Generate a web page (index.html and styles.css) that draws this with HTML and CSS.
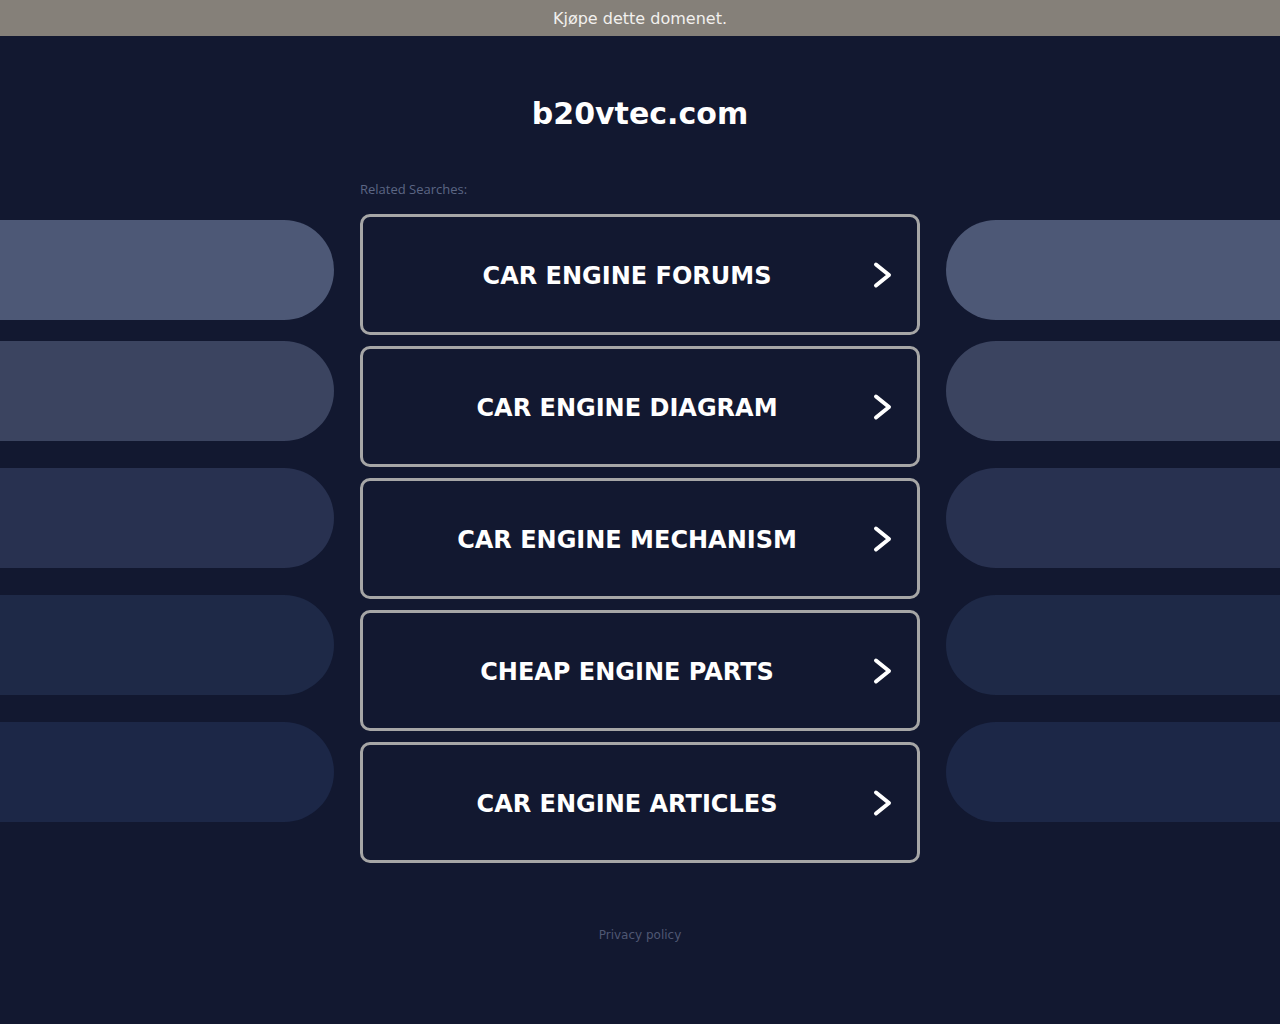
FILE: index.html
```html
<!DOCTYPE html>
<html>
<head>
  <meta charset="utf-8">
  <title>b20vtec.com</title>
  <link rel="stylesheet" href="styles.css">
</head>
<body>
  <div class="buy-bar"><a href="#">Kjøpe dette domenet.</a></div>

  <h1 class="domain">b20vtec.com</h1>

  <div class="layout">
    <div class="side side-left">
      <div class="pill pill-1"></div>
      <div class="pill pill-2"></div>
      <div class="pill pill-3"></div>
      <div class="pill pill-4"></div>
      <div class="pill pill-5"></div>
    </div>

    <div class="center">
      <p class="related">Related Searches:</p>
      <ul class="links">
        <li><a href="#"><span>Car Engine Forums</span><svg class="chev" viewBox="0 0 20 28"><path d="M3 3.5 L16 14 L3 24.5"/></svg></a></li>
        <li><a href="#"><span>Car Engine Diagram</span><svg class="chev" viewBox="0 0 20 28"><path d="M3 3.5 L16 14 L3 24.5"/></svg></a></li>
        <li><a href="#"><span>Car Engine Mechanism</span><svg class="chev" viewBox="0 0 20 28"><path d="M3 3.5 L16 14 L3 24.5"/></svg></a></li>
        <li><a href="#"><span>Cheap Engine Parts</span><svg class="chev" viewBox="0 0 20 28"><path d="M3 3.5 L16 14 L3 24.5"/></svg></a></li>
        <li><a href="#"><span>Car Engine Articles</span><svg class="chev" viewBox="0 0 20 28"><path d="M3 3.5 L16 14 L3 24.5"/></svg></a></li>
      </ul>
    </div>

    <div class="side side-right">
      <div class="pill pill-1"></div>
      <div class="pill pill-2"></div>
      <div class="pill pill-3"></div>
      <div class="pill pill-4"></div>
      <div class="pill pill-5"></div>
    </div>
  </div>

  <div class="footer"><a href="#">Privacy policy</a></div>
</body>
</html>
```

FILE: styles.css
```css
html, body {
  margin: 0;
  padding: 0;
}

body {
  background: #121830;
  font-family: "DejaVu Sans", Verdana, sans-serif;
  color: #fff;
  overflow: hidden;
}

a {
  text-decoration: none;
  color: inherit;
}

.buy-bar {
  height: 36px;
  background: #858079;
  color: #f2f0ee;
  font-size: 16px;
  line-height: 37px;
  text-align: center;
}

.domain {
  margin: 0;
  padding: 58px 0 0;
  height: 90px;
  font-size: 30px;
  font-weight: bold;
  line-height: 40px;
  text-align: center;
  color: #fff;
}

.layout {
  display: grid;
  grid-template-columns: 1fr 560px 1fr;
  column-gap: 26px;
  margin-top: -3px;
}

.side {
  display: flex;
  flex-direction: column;
  gap: 27px;
  padding-top: 39px;
}

.pill {
  height: 100px;
  border-radius: 50px;
}
.pill-1 { margin-bottom: -6px; background: #4d5876; }
.pill-2 { background: #3b4460; }
.pill-3 { background: #283150; }
.pill-4 { background: #1e2947; }
.pill-5 { background: #1c2747; }

.side-left .pill {
  margin-left: -60px;
}
.side-right .pill {
  margin-right: -60px;
}

.related {
  margin: 0 0 17px;
  font-family: "Open Sans", sans-serif;
  font-size: 13px;
  line-height: 16px;
  color: #5c6684;
}

.links {
  list-style: none;
  margin: 0;
  padding: 0;
  display: flex;
  flex-direction: column;
  gap: 11px;
}

.links a {
  display: flex;
  align-items: center;
  height: 115px;
  padding-left: 18px;
  border: 3px solid #a6a6a6;
  border-radius: 10px;
  font-size: 24px;
  font-weight: bold;
  text-transform: uppercase;
  color: #fff;
}

.links span {
  flex: 1;
  padding-top: 2px;
  text-align: center;
}

.chev {
  width: 20px;
  height: 28px;
  margin-right: 24px;
  fill: none;
  stroke: #fff;
  stroke-width: 4;
  stroke-linecap: round;
  stroke-linejoin: round;
}

.footer {
  padding-top: 65px;
  font-size: 12px;
  text-align: center;
  color: #4f5773;
}
```
